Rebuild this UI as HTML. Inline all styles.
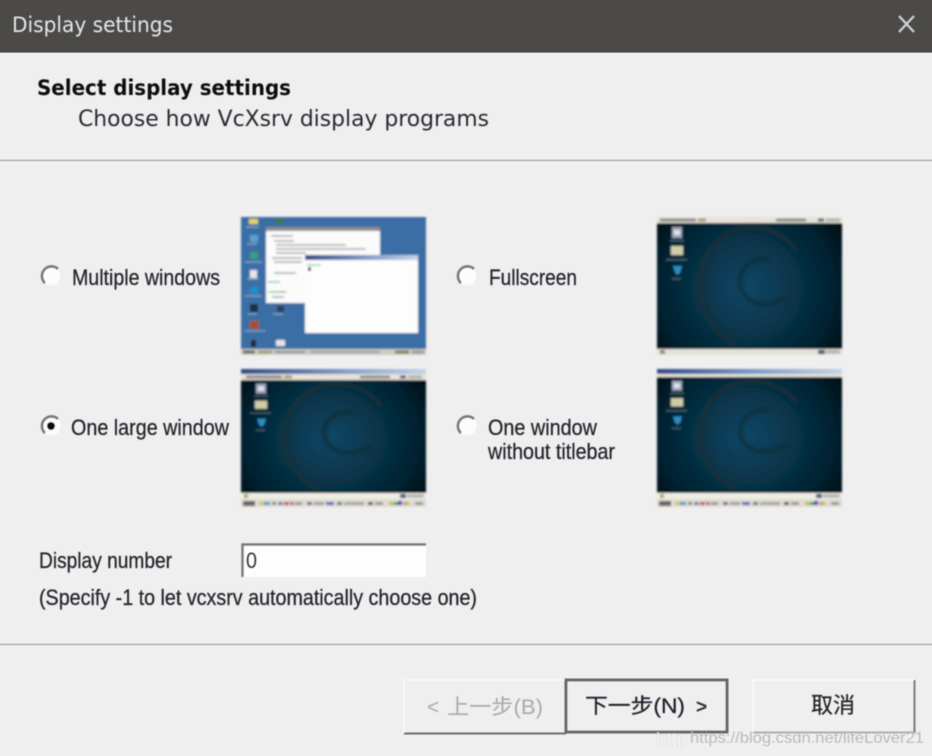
<!DOCTYPE html>
<html><head><meta charset="utf-8"><title>Display settings</title>
<style>html,body{margin:0;padding:0;background:#efefef;overflow:hidden}svg{display:block}
text{font-family:"Liberation Sans","Noto Sans CJK SC",sans-serif}
.dv{font-family:"DejaVu Sans","Liberation Sans",sans-serif}</style></head>
<body>
<svg xmlns="http://www.w3.org/2000/svg" width="932" height="756" viewBox="0 0 932 756">
<defs>
<filter id="b" x="-5%" y="-30%" width="110%" height="160%"><feGaussianBlur stdDeviation="0.6"/></filter>
<filter id="b1" x="-5%" y="-5%" width="110%" height="110%"><feGaussianBlur stdDeviation="1"/></filter>
<filter id="b3" x="-30%" y="-30%" width="160%" height="160%"><feGaussianBlur stdDeviation="1.6"/></filter>
<radialGradient id="deb" gradientUnits="userSpaceOnUse" cx="90" cy="65" r="112">
<stop offset="0" stop-color="#0b4766"/><stop offset="0.45" stop-color="#073347"/><stop offset="0.8" stop-color="#03202e"/><stop offset="1" stop-color="#010f16"/>
</radialGradient>
<linearGradient id="tb" x1="0" x2="1"><stop offset="0" stop-color="#2e4a88"/><stop offset=".6" stop-color="#8aa2cc"/><stop offset="1" stop-color="#c6d2e6"/></linearGradient>
<g id="desk">
<rect x="0" y="0" width="185" height="126" fill="url(#deb)"/>
<g filter="url(#b3)">
<path d="M140 29C128 10 108 4 91 5C62 6 44 32 44 62C44 90 58 112 80 124" fill="none" stroke="#1f2f35" stroke-width="5" opacity=".7"/>
<path d="M112 37C96 33 84 44 83 57C83 72 94 81 106 81C114 81 122 79 129 74" fill="none" stroke="#1a2c34" stroke-width="3.500" opacity=".85"/>
</g>
<rect x="15" y="4" width="10" height="11" fill="#9aa2b8"/><rect x="17" y="7" width="6" height="5" fill="#dfe2ea"/>
<rect x="14" y="23" width="12" height="9" fill="#cfcca8"/>
<path d="M16 43h9l-2 7l-3 2l-2-3z" fill="#2f8cc4"/>
<rect x="13" y="17" width="14" height="1.500" fill="#44606f"/><rect x="9" y="36" width="21" height="1.500" fill="#44606f"/><rect x="15" y="55" width="9" height="1.500" fill="#44606f"/>
</g>
<g id="taskbar">
<rect x="0" y="0" width="185" height="8" fill="#dfdcd2"/>
<rect x="2" y="2" width="12" height="5" fill="#66626a"/>
<rect x="18" y="3" width="5" height="3" fill="#c8c84a"/><rect x="23" y="3" width="6" height="3" fill="#4a90d0"/>
<rect x="31" y="3" width="4" height="3" fill="#8a8a8a"/><rect x="37" y="3" width="5" height="3" fill="#6a8ab0"/><rect x="43" y="3" width="5" height="3" fill="#c05050"/><rect x="49" y="3" width="4" height="3" fill="#c06060"/><rect x="54" y="3" width="7" height="3" fill="#9a9aa0"/>
<rect x="66" y="3" width="5" height="3" fill="#6a6a90"/><rect x="73" y="3" width="10" height="3" fill="#a0a0a8"/><rect x="85" y="3" width="8" height="3" fill="#5a5ac8"/><rect x="96" y="3" width="5" height="3" fill="#5a8a5a"/><rect x="103" y="3" width="20" height="3" fill="#a6a6a6"/><rect x="127" y="3" width="5" height="3" fill="#55555a"/><rect x="134" y="3" width="8" height="3" fill="#999"/>
<rect x="148" y="3" width="5" height="3" fill="#bcbc60"/><rect x="153" y="3" width="4" height="3" fill="#4aa04a"/><rect x="157" y="2" width="4" height="4" fill="#3a3ac8"/><rect x="162" y="3" width="6" height="3" fill="#b8b060"/><rect x="174" y="3" width="8" height="3" fill="#999"/>
</g>
</defs>

<rect width="932" height="756" fill="#efefef"/>

<!-- title bar -->
<rect width="932" height="52" fill="#4b4a48"/>
<rect y="52" width="932" height="1" fill="#8d8d8b"/>
<text class="dv" x="12" y="32" font-size="21" fill="#e6e6e6" textLength="161" lengthAdjust="spacingAndGlyphs" filter="url(#b)">Display settings</text>
<path d="M899 16L914 32M914 16L899 32" stroke="#d4d4d4" stroke-width="2.200" fill="none" filter="url(#b)"/>

<!-- header -->
<text class="dv" x="37" y="95" font-size="21" font-weight="bold" fill="#0a0a0a" textLength="254" lengthAdjust="spacingAndGlyphs" filter="url(#b)">Select display settings</text>
<text class="dv" x="78" y="126" font-size="22" fill="#2a2a33" textLength="411" lengthAdjust="spacingAndGlyphs" filter="url(#b)">Choose how VcXsrv display programs</text>
<rect y="159.500" width="932" height="2" fill="#bcbcbc"/>
<rect y="161.500" width="932" height="1" fill="#fafafa"/>

<!-- thumbnail 1 -->
<g filter="url(#b1)">
<rect x="241" y="217" width="185" height="134" fill="#3a6ea5"/>
<rect x="241" y="349" width="185" height="6" fill="#cfcbc0"/>
<rect x="243" y="350.500" width="12" height="3" fill="#666"/><rect x="258" y="351" width="14" height="2" fill="#8a8a40"/><rect x="275" y="351" width="30" height="2" fill="#8a86a0"/><rect x="310" y="351" width="70" height="2" fill="#9a9aa8"/><rect x="395" y="350.500" width="14" height="3" fill="#6a8a50"/><rect x="412" y="350.500" width="12" height="3" fill="#999"/>
<rect x="266" y="228" width="114" height="75" fill="#fbfbfb"/>
<rect x="266" y="227" width="114" height="4" fill="#8e8e8e"/>
<path d="M271 236h22M274 241h20M276 245h70M276 249h90M276 253h30M272 258h30M274 262h28M274 273h22M272 292h14M272 297h12" stroke="#8a8a8c" stroke-width="1.200"/>
<path d="M268 282h12M268 292h12" stroke="#55cf6f" stroke-width="1.200"/>
<rect x="305" y="255" width="113" height="78" fill="#fdfdfd"/>
<rect x="305" y="255" width="113" height="5" fill="url(#tb)"/>
<path d="M307 265h14" stroke="#55cf6f" stroke-width="1.200"/>
<rect x="308" y="267" width="3" height="4" fill="#445"/>
<rect x="249" y="219" width="9" height="5" fill="#e6d36a"/>
<rect x="277" y="218" width="6" height="6" fill="#3c7a3c"/>
<rect x="250" y="235" width="8" height="7" fill="#5f9fcf"/>
<rect x="250" y="252" width="8" height="7" fill="#3f9a7a"/>
<rect x="250" y="270" width="7" height="8" fill="#e5e5ee"/>
<rect x="250" y="287" width="8" height="7" fill="#1f8fcf"/>
<rect x="250" y="304" width="8" height="8" fill="#1c3040"/>
<rect x="277" y="306" width="7" height="6" fill="#304050"/>
<rect x="250" y="321" width="9" height="8" fill="#a8502a"/>
<rect x="251" y="340" width="5" height="7" fill="#262630"/>
<rect x="276" y="340" width="9" height="6" fill="#e6e6ea"/>
<path d="M246 227h13M247 244h10M245 262h17M247 279h12M245 296h17M248 314h9M273 314h10M245 331h20" stroke="#8fb0d0" stroke-width="1"/>
</g>

<!-- thumbnail 2 -->
<g filter="url(#b1)">
<rect x="657" y="217" width="185" height="6" fill="#e6e2d8"/>
<rect x="660" y="218.500" width="36" height="3" fill="#8a8a86"/><rect x="698" y="218.500" width="8" height="3" fill="#a69968"/><rect x="776" y="218.500" width="30" height="3" fill="#8a8a86"/><rect x="818" y="218.500" width="6" height="3" fill="#3a5a7a"/><rect x="826" y="218.500" width="14" height="3" fill="#b0b0aa"/>
<use href="#desk" transform="translate(657,223)"/>
<rect x="657" y="349" width="185" height="6" fill="#e6e2d8"/>
<rect x="818" y="350" width="7" height="4" fill="#3a5a7a"/><rect x="826" y="350.500" width="14" height="3" fill="#b0b0aa"/><rect x="660" y="350" width="5" height="4" fill="#8a8a86"/>
</g>

<!-- thumbnail 3 -->
<g filter="url(#b1)">
<rect x="241" y="369" width="185" height="5" fill="url(#tb)"/>
<rect x="241" y="374" width="185" height="6" fill="#e6e2d8"/>
<rect x="246" y="375.500" width="36" height="3" fill="#8a8a86"/><rect x="284" y="375.500" width="8" height="3" fill="#a69968"/><rect x="360" y="375.500" width="30" height="3" fill="#8a8a86"/><rect x="400" y="375.500" width="6" height="3" fill="#3a5a7a"/><rect x="408" y="375.500" width="14" height="3" fill="#b0b0aa"/>
<use href="#desk" transform="translate(241,380) scale(1,.9)"/>
<rect x="241" y="493" width="185" height="6" fill="#f0ede4"/>
<rect x="400" y="494" width="6" height="4" fill="#3a5a7a"/><rect x="407" y="494.500" width="17" height="3" fill="#b0b0aa"/><rect x="244" y="494" width="4" height="4" fill="#a8a860"/>
<use href="#taskbar" transform="translate(241,499)"/>
</g>

<!-- thumbnail 4 -->
<g filter="url(#b1)">
<rect x="657" y="369" width="185" height="5" fill="url(#tb)"/>
<rect x="657" y="374" width="185" height="3" fill="#e6e2d8"/>
<use href="#desk" transform="translate(657,377) scale(1,.92)"/>
<rect x="657" y="493" width="185" height="6" fill="#f0ede4"/>
<rect x="816" y="494" width="6" height="4" fill="#3a5a7a"/><rect x="823" y="494.500" width="17" height="3" fill="#b0b0aa"/><rect x="660" y="494" width="4" height="4" fill="#a8a860"/>
<use href="#taskbar" transform="translate(657,499)"/>
</g>

<!-- radios -->
<g filter="url(#b)">
<circle cx="51" cy="276" r="9.500" fill="#fcfcfc"/>
<path d="M45 283A9 9 0 0 1 58 269" fill="none" stroke="#777" stroke-width="2.600"/>
<circle cx="467" cy="276" r="9.500" fill="#fcfcfc"/>
<path d="M461 283A9 9 0 0 1 474 269" fill="none" stroke="#777" stroke-width="2.600"/>
<circle cx="51" cy="426" r="9.500" fill="#fcfcfc"/>
<path d="M45 433A9 9 0 0 1 58 419" fill="none" stroke="#777" stroke-width="2.600"/>
<circle cx="51" cy="426" r="4" fill="#111"/>
<circle cx="467" cy="426" r="9.500" fill="#fcfcfc"/>
<path d="M461 433A9 9 0 0 1 474 419" fill="none" stroke="#777" stroke-width="2.600"/>
</g>

<!-- labels -->
<g font-size="22" fill="#24242c" stroke="#24242c" stroke-width=".25" filter="url(#b)">
<text x="72" y="285" textLength="148" lengthAdjust="spacingAndGlyphs">Multiple windows</text>
<text x="489" y="285" textLength="88" lengthAdjust="spacingAndGlyphs">Fullscreen</text>
<text x="71" y="435" textLength="158" lengthAdjust="spacingAndGlyphs">One large window</text>
<text x="488" y="435" textLength="109" lengthAdjust="spacingAndGlyphs">One window</text>
<text x="488" y="459" textLength="127" lengthAdjust="spacingAndGlyphs">without titlebar</text>
<text x="39" y="568" textLength="133" lengthAdjust="spacingAndGlyphs">Display number</text>
<text x="39" y="605" textLength="438" lengthAdjust="spacingAndGlyphs">(Specify -1 to let vcxsrv automatically choose one)</text>
</g>

<!-- input -->
<g filter="url(#b)">
<rect x="241" y="543" width="185" height="34" fill="#fdfdfd"/>
<path d="M242.500 577V544.500H426" fill="none" stroke="#777" stroke-width="2.500"/>
</g>
<text x="246" y="568" font-size="22" fill="#333" textLength="11" lengthAdjust="spacingAndGlyphs" filter="url(#b)">0</text>

<!-- footer -->
<rect y="643.500" width="932" height="2" fill="#bcbcbc"/>
<rect y="645.500" width="932" height="1" fill="#fafafa"/>

<g filter="url(#b)">
<path d="M404 733V680H566" fill="none" stroke="#fbfbfb" stroke-width="1.500"/>
<rect x="404" y="732.500" width="162" height="2" fill="#6d6d6d"/>
<rect x="566" y="680" width="161" height="52" fill="#efefef" stroke="#666" stroke-width="3"/>
<path d="M753 733V680H914" fill="none" stroke="#fbfbfb" stroke-width="1.500"/>
<path d="M914.500 680V733" stroke="#7a7a7a" stroke-width="2"/>
<path d="M753 732.500H915" stroke="#9a9a9a" stroke-width="1.500"/>
</g>
<g filter="url(#b)">
<text x="427" y="714" font-size="21" fill="#aaa">&lt;</text>
<text x="447" y="714" font-size="21" fill="#a9a9a9" textLength="96" lengthAdjust="spacingAndGlyphs">上一步(B)</text>
<text x="585" y="713" font-size="21" fill="#1e1e26" stroke="#1e1e26" stroke-width=".2" textLength="100" lengthAdjust="spacingAndGlyphs">下一步(N)</text>
<text x="696" y="713" font-size="19" font-weight="bold" fill="#333">&gt;</text>
<text x="811" y="713" font-size="22" fill="#222" stroke="#222" stroke-width=".2" textLength="44" lengthAdjust="spacingAndGlyphs">取消</text>
</g>

<!-- watermark -->
<text x="656" y="746" font-size="19" fill="#ffffff" fill-opacity=".8" stroke="#a9a9a9" stroke-opacity=".4" stroke-width=".5" filter="url(#b)">http</text>
<text x="690" y="744" font-size="17" fill="#ffffff" fill-opacity=".7" textLength="234" lengthAdjust="spacingAndGlyphs" filter="url(#b)">https://blog.csdn.net/lifeLover21</text>
<text x="690" y="743" font-size="16" fill="#a0a0a0" fill-opacity=".75" textLength="234" lengthAdjust="spacingAndGlyphs" filter="url(#b)">https://blog.csdn.net/lifeLover21</text>
</svg>
</body></html>
